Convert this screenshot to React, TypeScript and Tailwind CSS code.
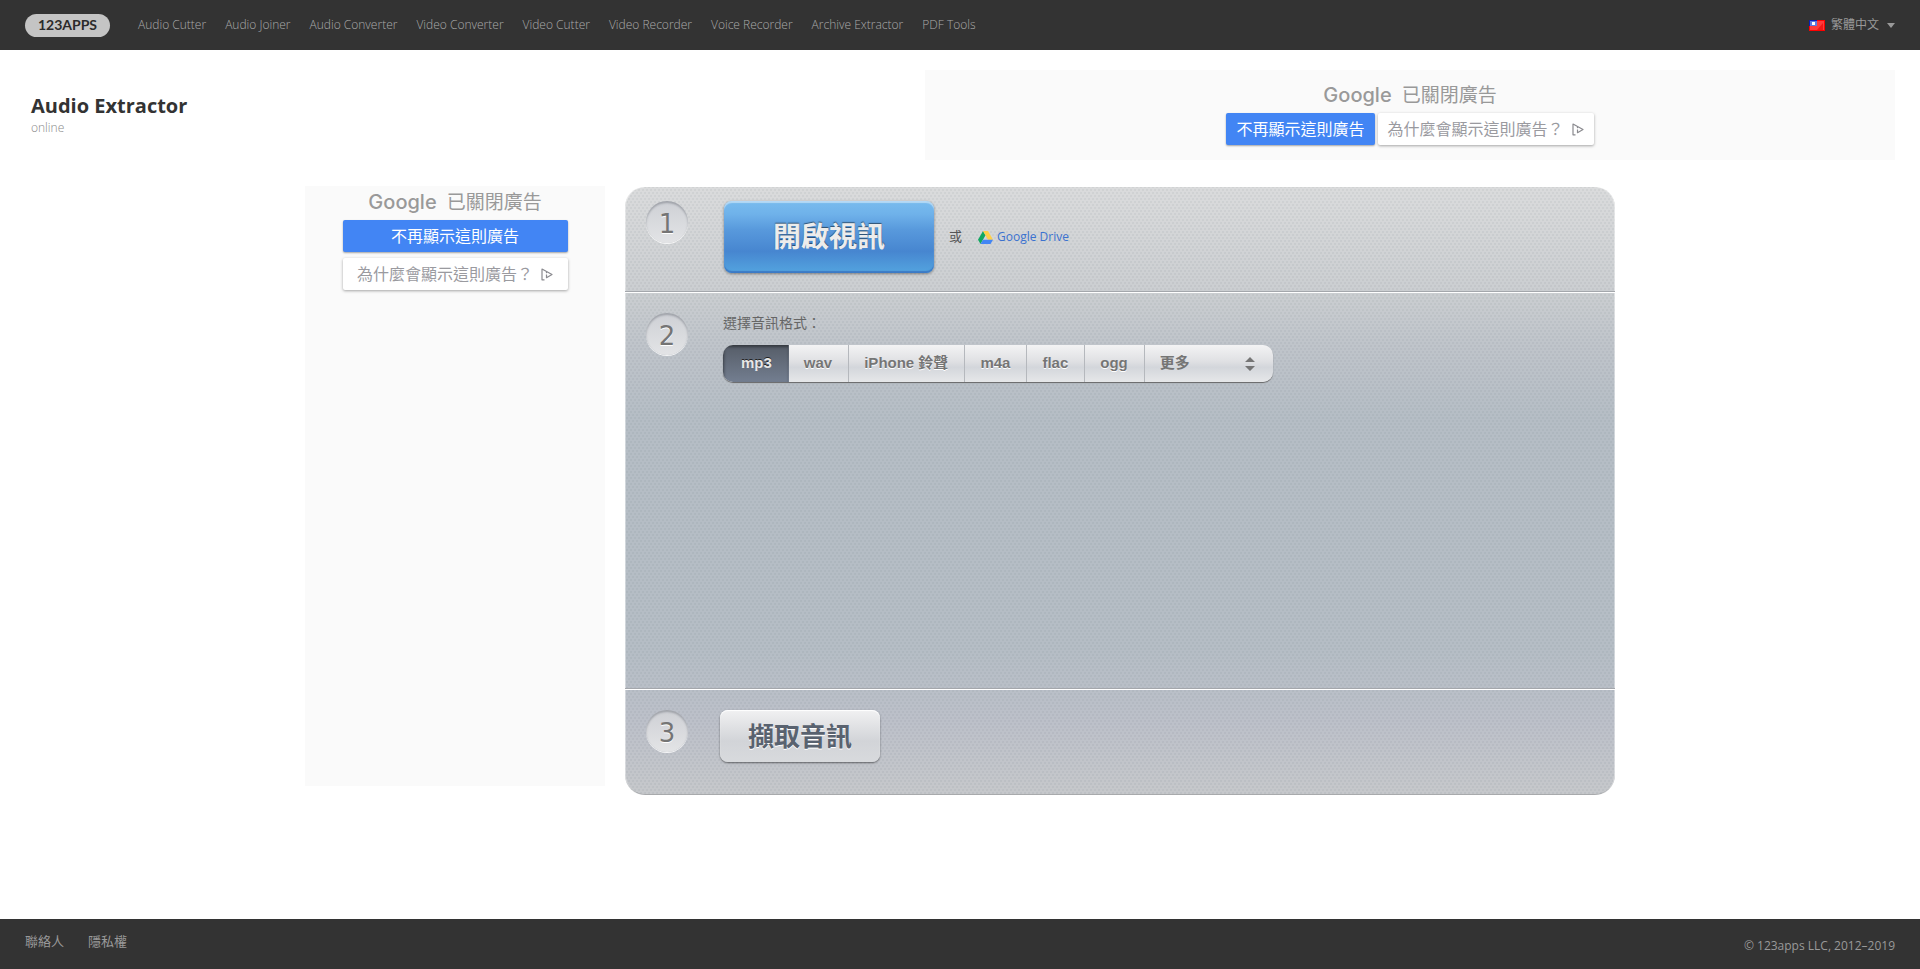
import type { ReactNode } from "react";

const apps = [
  "Audio Cutter",
  "Audio Joiner",
  "Audio Converter",
  "Video Converter",
  "Video Cutter",
  "Video Recorder",
  "Voice Recorder",
  "Archive Extractor",
  "PDF Tools",
];

const formats = [
  { id: "mp3", label: "mp3" },
  { id: "wav", label: "wav" },
  { id: "m4r", label: "iPhone 鈴聲" },
  { id: "m4a", label: "m4a" },
  { id: "flac", label: "flac" },
  { id: "ogg", label: "ogg" },
];

function FlagTW() {
  return (
    <svg width="16" height="11" viewBox="0 0 16 11" aria-hidden="true">
      <rect width="16" height="11" fill="#fe0000" />
      <rect x="1" y="1" width="14" height="9" fill="#ff3b3b" />
      <path d="M8 10 14 3v7z" fill="#f01818" />
      <rect width="8" height="6" fill="#0a1fb4" />
      <rect x="1" y="1" width="7" height="5" fill="#5f7be0" />
      <rect x="3" y="2" width="3" height="3" fill="#fff" />
    </svg>
  );
}

function DriveIcon() {
  return (
    <svg width="15" height="13" viewBox="0 0 15 13" aria-hidden="true">
      <path d="M5 0 0 8.7 2.5 13 7.5 4.3z" fill="#11a861" />
      <path d="M5 0h5l5 8.7h-5z" fill="#ffcf48" />
      <path d="M2.5 13 5 8.7h10L12.5 13z" fill="#4285f4" />
    </svg>
  );
}

function AdChoicesIcon() {
  return (
    <svg width="12" height="13" viewBox="0 0 12 13" fill="none" stroke="#8a8a8f" strokeWidth="1.2" aria-hidden="true">
      <path d="M3.5 11.8H1V1l10 5.5-5.5 3.2V6.5" strokeLinejoin="round" />
      <path d="M5.5 4v1.2" />
    </svg>
  );
}

function AdTitle() {
  return (
    <div className="flex h-7 items-center justify-center gap-2.5 text-[#999]">
      <span className="font-['Inter',sans-serif] text-xl leading-7 font-medium">Google</span>
      <span className="text-[19px] leading-7">已關閉廣告</span>
    </div>
  );
}

function AdButtons({ stacked }: { stacked?: boolean }) {
  return (
    <div className={stacked ? "mx-auto flex w-[225px] flex-col gap-1.5" : "flex justify-center gap-[3px]"}>
      <button className="h-8 rounded-xs bg-[#4285f4] px-2.5 text-base leading-8 text-white shadow-[0_1px_2px_rgba(0,0,0,0.35)]">
        不再顯示這則廣告
      </button>
      <button className="flex h-8 items-center justify-center gap-2 rounded-xs bg-white px-2.5 text-base leading-8 text-[#9a9a9f] shadow-[0_1px_3px_rgba(0,0,0,0.35)]">
        為什麼會顯示這則廣告？
        <AdChoicesIcon />
      </button>
    </div>
  );
}

function Step({ n, className, children }: { n: number; className: string; children?: ReactNode }) {
  return (
    <section className={`flex px-[21px] ${className}`}>
      <span className="flex size-[42px] shrink-0 items-center justify-center rounded-full bg-linear-to-b from-[#ced0d5] to-[#e3e4e6] pt-1 font-['DejaVu_Sans',sans-serif] text-[26px] leading-none text-[#757575] shadow-[inset_0_2px_2px_rgba(90,95,105,0.4),0_1px_0_rgba(255,255,255,0.8)] [text-shadow:0_1px_0_#fff]">
        {n}
      </span>
      {children}
    </section>
  );
}

export default function App() {
  return (
    <div className="flex min-h-screen flex-col bg-white font-['Open_Sans','Noto_Sans_CJK_TC',sans-serif] text-xs text-[#333]">
      <header className="flex h-[50px] items-center bg-[#333] px-[25px] text-[#999]">
        <a
          href="#"
          className="mr-7 flex h-[23px] w-[85px] items-center justify-center rounded-full bg-[#c4c4c4] font-['Lato',sans-serif] text-sm font-bold text-[#2b2b2b]"
        >
          123APPS
        </a>
        <nav className="flex flex-1 gap-[19px] font-light text-[#aaa]">
          {apps.map((name) => (
            <a key={name} href="#" className="whitespace-nowrap">
              {name}
            </a>
          ))}
        </nav>
        <button className="flex items-center gap-1.5">
          <FlagTW />
          繁體中文
          <svg width="8" height="5" viewBox="0 0 8 5" className="ml-0.5" aria-hidden="true">
            <path d="M0 0h8L4 5z" fill="#999" />
          </svg>
        </button>
      </header>

      <div className="flex items-start justify-between pt-5 pr-[25px] pl-[31px]">
        <div className="pt-[22px]">
          <h1 className="text-xl leading-7 font-bold">Audio Extractor</h1>
          <p className="leading-4 font-light text-[#888]">online</p>
        </div>
        <aside className="h-[90px] w-[970px] bg-[#fafafa] pt-[11px]">
          <AdTitle />
          <div className="pt-1">
            <AdButtons />
          </div>
        </aside>
      </div>

      <main className="mx-auto flex w-full max-w-[1310px] flex-1 items-start gap-5 pt-[26px]">
        <aside className="h-[600px] w-[300px] shrink-0 bg-[#fafafa] pt-0.5">
          <AdTitle />
          <div className="pt-1">
            <AdButtons stacked />
          </div>
        </aside>

        <div className="mt-px flex-1 rounded-[20px] bg-[radial-gradient(rgba(80,95,105,0.07)_1px,transparent_1px),radial-gradient(rgba(80,95,105,0.07)_1px,transparent_1px),linear-gradient(#dadbdc,#cbced1_17%,#bfc4ca_26%,#b5bdc5_38%,#b5bdc5_76%,#bcc0c9_88%,#c6c8cb)] bg-size-[4px_6px,4px_6px,100%_100%] bg-position-[0_0,2px_3px,0_0] shadow-[inset_1px_0_0_rgba(255,255,255,0.4),inset_-1px_0_0_rgba(255,255,255,0.4),inset_0_-1px_0_rgba(0,0,0,0.15)]">
          <Step n={1} className="h-[105px] border-b border-[#a4a7ac] pt-3.5">
            <div className="ml-9 flex h-[72px] items-center">
              <button className="h-full w-[210px] rounded-lg bg-[linear-gradient(#78bbee,#6fb2ea_18%,#5899dc_40%,#4786d0_70%,#53a4df)] text-[28px] font-bold text-[#ececec] shadow-[inset_0_2px_1px_rgba(255,255,255,0.45),inset_0_-2px_1px_#3c7ac5,0_1px_3px_rgba(0,0,0,0.4)] [text-shadow:0_-1px_1px_rgba(0,0,0,0.5)]">
                開啟視訊
              </button>
              <span className="ml-[15px] text-[13px] text-[#555]">或</span>
              <a href="#" className="ml-4 flex items-center gap-1 text-xs text-[#3b72cf]">
                <DriveIcon />
                Google Drive
              </a>
            </div>
          </Step>

          <Step n={2} className="h-[397px] border-t border-b border-t-white border-b-[#a4a7ac] pt-5">
            <fieldset className="ml-[35px]">
              <legend className="text-sm leading-5 text-[#666]">選擇音訊格式：</legend>
              <div className="mt-3 flex h-[37px] overflow-hidden rounded-[10px] bg-[linear-gradient(#f3f3f4,#dfe0e3_45%,#d3d6db_60%,#e6e7e9)] font-['Liberation_Sans','Noto_Sans_CJK_TC',sans-serif] text-[15px] leading-[35px] font-bold text-[#757575] shadow-[0_1px_1px_#666] [text-shadow:0_1px_0_#fff]">
                {formats.map((f) => (
                  <label
                    key={f.id}
                    className="cursor-pointer border-r border-[#b5b8bd] pr-4 pl-[15px] has-checked:border-transparent has-checked:bg-linear-to-b has-checked:from-[#565d68] has-checked:to-[#737e90] has-checked:pl-[18px] has-checked:text-[#e8e8e8] has-checked:shadow-[inset_1px_2px_3px_rgba(0,0,0,0.4)] has-checked:[text-shadow:0_-1px_0_#222]"
                  >
                    <input type="radio" name="format" value={f.id} defaultChecked={f.id === "mp3"} className="sr-only" />
                    {f.label}
                  </label>
                ))}
                <div className="relative w-32">
                  <select aria-label="更多" className="h-[35px] w-full appearance-none bg-transparent pl-[15px]">
                    <option>更多</option>
                  </select>
                  <svg
                    width="10"
                    height="14"
                    viewBox="0 0 10 14"
                    className="pointer-events-none absolute top-3 right-[18px]"
                    aria-hidden="true"
                  >
                    <path d="M0 5 5 0l5 5zM0 9h10l-5 5z" fill="#757575" />
                  </svg>
                </div>
              </div>
            </fieldset>
          </Step>

          <Step n={3} className="h-[106px] border-t border-white pt-5">
            <button className="ml-8 h-[52px] w-40 rounded-lg bg-linear-to-b from-[#f1f1f2] via-[#d2d4d8] via-60% to-[#d8dadd] text-[26px] font-bold text-[#59626f] shadow-[inset_0_1px_1px_#fff,0_1px_2px_rgba(0,0,0,0.5)] [text-shadow:0_1px_0_#fff]">
              擷取音訊
            </button>
          </Step>
        </div>
      </main>

      <footer className="flex h-[50px] items-center justify-between bg-[#333] px-[25px] text-[#999]">
        <nav className="flex gap-6 pb-1 text-[13px]">
          <a href="#">聯絡人</a>
          <a href="#">隱私權</a>
        </nav>
        <p className="pt-1">© 123apps LLC, 2012–2019</p>
      </footer>
    </div>
  );
}
